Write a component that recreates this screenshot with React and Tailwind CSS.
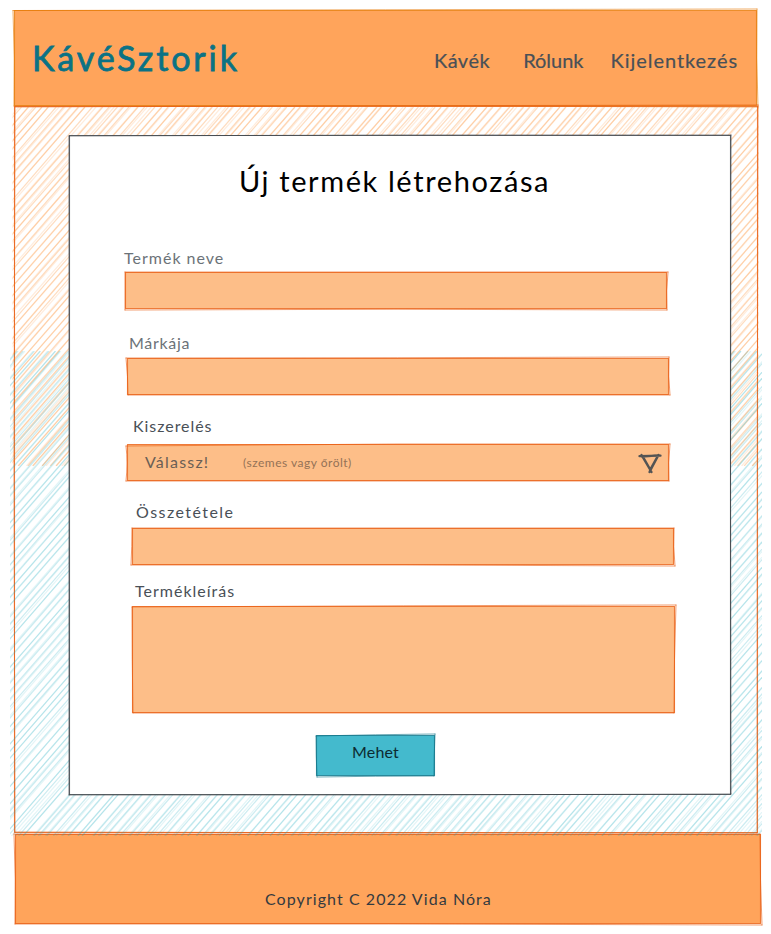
import React from "react";

const noise = (n) => {
  const v = Math.sin(n * 127.1 + 11.7) * 43758.5453;
  return v - Math.floor(v);
};

// Diagonal pencil strokes covering a rectangle, two passes per line.
function Hatch({ x, y, w, h, color, seed, strength, gap = 7.4 }) {
  const run = h / 1.15;
  const lines = [];
  for (let c = 0, i = 0; c < w + run; c += gap, i++) {
    for (let pass = 0; pass < 2; pass++) {
      const k = seed + i * 4 + pass * 2;
      const a = c + (noise(k) - 0.5) * 4.4;
      const b = c + (noise(k + 1) - 0.5) * 4.4;
      lines.push(
        <line
          key={i + "-" + pass}
          x1={x + a}
          y1={y}
          x2={x + b - run}
          y2={y + h}
          strokeOpacity={strength * (pass ? 0.55 : 1)}
        />
      );
    }
  }
  const id = "hatch" + seed;
  return (
    <g>
      <clipPath id={id}>
        <rect x={x} y={y} width={w} height={h} />
      </clipPath>
      <g clipPath={`url(#${id})`} stroke={color} strokeWidth="1.2">
        {lines}
      </g>
    </g>
  );
}

// Hand-drawn rectangle: j holds the corner offsets of the second outline.
function Sketch({ w, h, fill = "none", stroke, j, className = "", children }) {
  const pts = `0.5,0.5 ${w - 0.5},0.5 ${w - 0.5},${h - 0.5} 0.5,${h - 0.5}`;
  return (
    <div className={"relative shrink-0 " + className}>
      <svg className="absolute inset-0 overflow-visible pointer-events-none" width={w} height={h}>
        <polygon points={pts} fill={fill} />
        <g stroke={stroke} fill="none" strokeLinecap="round">
          <polygon points={pts} strokeWidth="1.1" strokeOpacity="0.75" />
          <path
            strokeWidth="1"
            strokeOpacity="0.6"
            d={`M${j[0]} ${j[1]}Q${w / 2} ${-j[1] / 2} ${w + j[2]} ${j[3]}M${w + j[2]} ${j[3]}Q${w - 1} ${h / 2} ${w + j[4]} ${h + j[5]}M${w + j[4]} ${h + j[5]}Q${w / 2} ${h - j[5] / 2} ${j[6]} ${h + j[7]}M${j[6]} ${h + j[7]}Q${-j[0]} ${h / 2} ${j[0]} ${j[1]}`}
          />
        </g>
      </svg>
      <div className="relative h-full">{children}</div>
    </div>
  );
}

const ORANGE = "#e8590c";
const PEACH = "#fdbe88";

function Label({ className, children }) {
  return <label className={"block h-5 text-[16px] leading-5 whitespace-nowrap " + className}>{children}</label>;
}

export default function App() {
  return (
    <div
      className="flex h-[934px] w-[771px] flex-col overflow-hidden bg-white pt-[10px] text-[#495057]"
      style={{ fontFamily: 'Lato, "Noto Sans", sans-serif' }}
    >
      <Sketch w={743} h={96} fill="#ffa45b" stroke="#e67700" j={[-1, 0.5, 0, -1, 1, 1, 0, 0]} className="ml-[14px] h-[96px] w-[743px]">
        <header className="flex h-full items-start whitespace-nowrap">
          <h1 className="ml-[18px] mt-[27px] text-[34px] leading-[42px] tracking-[2.9px] text-[#0b7285] [-webkit-text-stroke:0.8px_#0b7285]">KávéSztorik</h1>
          <nav className="ml-auto mr-[19px] mt-[38px] flex text-[20px] leading-6 [-webkit-text-stroke:0.2px_#495057]">
            <a className="mr-[33px] tracking-[0.5px]">Kávék</a>
            <a className="mr-[27px] tracking-[0px]">Rólunk</a>
            <a className="tracking-[0.95px]">Kijelentkezés</a>
          </nav>
        </header>
      </Sketch>

      <Sketch w={744} h={727} stroke={ORANGE} j={[1, 1, 0, -1, -1, 0, 1, -1]} className="z-10 ml-[14px] h-[727px] w-[744px]">
        <svg className="absolute inset-0 overflow-visible pointer-events-none" width="744" height="727">
          <Hatch x={-1.5} y={1} w={746} h={359} color="#fd7e14" seed={3} strength={0.27} />
          <Hatch x={-4} y={245} w={752} h={485} color="#15aabf" seed={900} strength={0.22} />
        </svg>
        <main className="relative pl-[55px] pt-[29px]">
          <Sketch w={662} h={660} fill="#ffffff" stroke="#343a40" j={[0, 1, 0, 0, 0, -1, 0, 0]} className="h-[660px] w-[662px]">
            <form className="flex h-full flex-col">
              <h2 className="ml-[170px] mt-[28px] h-9 whitespace-nowrap text-[29px] leading-9 tracking-[1.6px] text-black">
                Új termék létrehozása
              </h2>

              <Label className="ml-[55px] mt-[49px] tracking-[1px] text-[#6b7278]">Termék neve</Label>
              <Sketch w={542} h={37} fill={PEACH} stroke={ORANGE} j={[0, 0, 1, 0, 0, 1, 0, 1]} className="ml-[56px] mt-[4px] h-[37px] w-[542px]" />

              <Label className="ml-[60px] mt-[24px] tracking-[0.7px] text-[#6b7278]">Márkája</Label>
              <Sketch w={542} h={37} fill={PEACH} stroke={ORANGE} j={[-1, 0, 0, -1, 1, 0, 1, 0]} className="ml-[58px] mt-[5px] h-[37px] w-[542px]" />

              <Label className="ml-[64px] mt-[21px] tracking-[0.95px]">Kiszerelés</Label>
              <Sketch w={542} h={37} fill={PEACH} stroke={ORANGE} j={[-1, 2, 1, 0, 0, 0, -1, 0]} className="ml-[58px] mt-[8px] h-[37px] w-[542px]">
                <div className="flex h-full items-center whitespace-nowrap pb-[2px] pl-[18px] pr-[7px]">
                  <span className="w-[98px] text-[16px] tracking-[1.2px] text-[#6b5f55]">Válassz!</span>
                  <span className="pt-[2px] text-[12px] tracking-[0.5px] text-[#947256]">(szemes vagy őrölt)</span>
                  <svg className="ml-auto mt-[5px]" width="24" height="22" fill="none" stroke="#545454" strokeWidth="2.3" strokeLinecap="round">
                    <path d="M1.5 3.2L22.5 2.7M3.5 2L13.5 19M20.5 2L11.5 19M4.5 3L12.5 17M4 3.6L20 2.4M19.5 3.5L12 17" />
                  </svg>
                </div>
              </Sketch>

              <Label className="ml-[67px] mt-[21px] tracking-[1.45px]">Összetétele</Label>
              <Sketch w={542} h={37} fill={PEACH} stroke={ORANGE} j={[0, 0, 0, 0, 1, 1, -1, 0]} className="ml-[63px] mt-[6px] h-[37px] w-[542px]" />

              <Label className="ml-[66px] mt-[16px] tracking-[1px]">Termékleírás</Label>
              <Sketch w={543} h={107} fill={PEACH} stroke={ORANGE} j={[0, 1, 1, -1, -1, 0, 1, 0]} className="ml-[63px] mt-[5px] h-[107px] w-[543px]" />

              <Sketch w={119} h={41} fill="#44bacd" stroke="#0b7285" j={[0, 1, 0, -1, -1, 0, 1, 1]} className="ml-[247px] mt-[22px] h-[41px] w-[119px]">
                <button type="button" className="block h-full w-full pb-[7px] text-[16px] tracking-[0.2px] text-[#0c2b31]">Mehet</button>
              </Sketch>
            </form>
          </Sketch>
        </main>
      </Sketch>

      <Sketch w={746} h={90} fill="#ffa45b" stroke={ORANGE} j={[-1, 0, -1, 0, 1, 1, 0, 0]} className="ml-[15px] mt-px h-[90px] w-[746px]">
        <footer className="pl-[250px] pt-[53px] text-[16px] leading-6 tracking-[1.07px] text-[#343a40]">Copyright C 2022 Vida Nóra</footer>
      </Sketch>
    </div>
  );
}
